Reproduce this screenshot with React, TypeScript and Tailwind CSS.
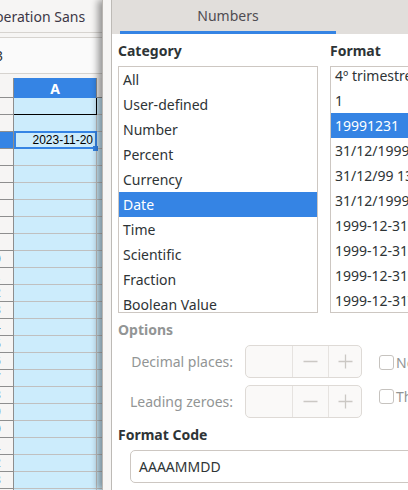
import React from "react";

const categories = [
  "All",
  "User-defined",
  "Number",
  "Percent",
  "Currency",
  "Date",
  "Time",
  "Scientific",
  "Fraction",
  "Boolean Value",
];

const formats = [
  "4º trimestre de 1999",
  "1",
  "19991231",
  "31/12/1999 13:37",
  "31/12/99 13:37",
  "31/12/1999 13:37:46",
  "1999-12-31",
  "1999-12-31 13:37",
  "1999-12-31 13:37:46",
  "1999-12-31T13:37:46",
];

function Minus() {
  return (
    <svg width="15" height="15" viewBox="0 0 15 15" fill="none">
      <path d="M0.5 7.5h14" stroke="#cbc8c4" strokeWidth="1.3" />
    </svg>
  );
}

function Plus() {
  return (
    <svg width="15" height="15" viewBox="0 0 15 15" fill="none">
      <path d="M0.5 7.5h14M7.5 0.5v14" stroke="#cbc8c4" strokeWidth="1.3" />
    </svg>
  );
}

function Spin() {
  return (
    <div className="ml-[12px] flex h-[33px] w-[117px] flex-none overflow-hidden rounded-[5px] border border-[#dedad6] bg-[#faf9f8]">
      <div className="w-[46px] flex-none" />
      <div className="flex w-[36px] flex-none items-center justify-center border-l border-[#e6e3e0]">
        <Minus />
      </div>
      <div className="flex flex-1 items-center justify-center border-l border-[#e6e3e0]">
        <Plus />
      </div>
    </div>
  );
}

export default function App() {
  const rows = Array.from({ length: 24 }, (_, i) => i + 1);
  return (
    <div className="flex h-[490px] w-[408px] overflow-hidden bg-white font-['Noto_Sans',sans-serif] text-[14px] text-[#2e3436]">
      {/* Spreadsheet in the background */}
      <div className="flex w-[102px] flex-none flex-col overflow-hidden bg-white">
        <div className="flex h-[33px] flex-none items-center overflow-hidden border-b border-[#d6d3cf] bg-[#f6f5f4]">
          <span className="ml-[-16px] whitespace-nowrap text-[#3d3846]">Liberation Sans</span>
        </div>
        <div className="h-[5px] flex-none border-b border-[#d6d3cf] bg-[#f6f5f4]" />
        <div className="flex h-[36px] flex-none items-center overflow-hidden border-b border-[#d6d3cf] bg-[#fafafa]">
          <span className="ml-[-14px] whitespace-nowrap text-[#2e3436]">A3</span>
        </div>
        <div className="h-[4px] flex-none bg-[#f6f5f4]" />
        <div className="flex h-[20px] flex-none">
          <div className="w-[14px] flex-none border-b border-r border-[#8e8e8e] bg-[#f6f5f4]" />
          <div className="flex w-[83px] flex-none items-center justify-center border-r border-[#8e8e8e] bg-[#3584e4] text-[14px] font-bold text-white">
            A
          </div>
          <div className="flex-1 border-b border-[#8e8e8e] bg-[#f2f1f0]" />
        </div>
        {rows.map((r) => (
          <div key={r} className="flex h-[17px] flex-none">
            <div
              className={`w-[14px] flex-none overflow-hidden border-b border-r border-[#8e8e8e] ${
                r === 3 ? "bg-[#3584e4]" : "bg-[#f6f5f4]"
              }`}
            >
              <div className="ml-[-21px] w-[30px] text-center font-['Liberation_Sans',sans-serif] text-[12px] leading-[16px] text-[#2e3436]">
                {r}
              </div>
            </div>
            {r === 1 ? (
              <div className="w-[83px] flex-none border-b border-r border-black bg-[#ccecfc]" />
            ) : r === 3 ? (
              <div className="relative flex w-[83px] flex-none items-center justify-end border-b border-r border-[#c0c0c0] bg-[#ccecfc] pr-[3px] font-['Liberation_Sans',sans-serif] text-[12px] text-black">
                2023-11-20
                <div className="absolute bottom-[-1px] left-0 right-[-1px] top-[-1px] border-2 border-[#3584e4]" />
                <div className="absolute bottom-[-3px] right-[-2px] h-[5px] w-[5px] bg-[#3584e4]" />
              </div>
            ) : (
              <div className="w-[83px] flex-none border-b border-r border-[#c0c0c0] bg-[#ccecfc]" />
            )}
            <div className="flex-1 border-b border-[#c0c0c0] bg-[#ccecfc]" />
          </div>
        ))}
      </div>

      {/* Format cells dialog */}
      <div className="relative z-10 flex w-[306px] flex-none border-l border-[#b8b5b1] bg-[#f6f5f4] pl-[8px] shadow-[-4px_0_7px_rgba(0,0,0,0.4)]">
        <div className="flex min-w-0 flex-1 flex-col border-l border-[#bdbab6]">
          <div className="flex h-[34px] flex-none bg-[#e1dedb] pl-[8px]">
            <div className="flex w-[216px] flex-none flex-col">
              <div className="flex flex-1 items-center justify-center text-[#4f4c52]">Numbers</div>
              <div className="h-[3px] bg-[#3584e4]" />
            </div>
          </div>
          <div className="flex-1 overflow-hidden bg-white pl-[6px] pt-[5px]">
            <div className="flex gap-[12px]">
              <div className="w-[200px] flex-none">
                <div className="h-[24px] font-bold leading-[24px]">Category</div>
                <div className="mt-[3px] h-[247px] overflow-hidden border border-[#cdc7c2] bg-white">
                  {categories.map((c) => (
                    <div
                      key={c}
                      className={`h-[25px] whitespace-nowrap pl-[4px] leading-[25px] ${
                        c === "Date" ? "bg-[#3584e4] text-white" : ""
                      }`}
                    >
                      {c}
                    </div>
                  ))}
                </div>
              </div>
              <div className="w-[200px] flex-none">
                <div className="h-[24px] font-bold leading-[24px]">Format</div>
                <div className="mt-[3px] h-[247px] overflow-hidden border border-[#cdc7c2] bg-white">
                  <div className="mt-[-4px]">
                    {formats.map((f, i) => (
                      <div
                        key={i}
                        className={`h-[25px] whitespace-nowrap pl-[4px] leading-[25px] ${
                          i === 2 ? "bg-[#3584e4] text-white" : ""
                        }`}
                      >
                        {f}
                      </div>
                    ))}
                  </div>
                </div>
              </div>
            </div>

            <div className="mt-[5px] h-[24px] font-bold leading-[24px] text-[#929595]">Options</div>
            <div className="mt-[3px] flex">
              <div className="flex flex-none flex-col gap-[7px] pl-[12px]">
                <div className="flex h-[33px] items-center">
                  <div className="w-[103px] whitespace-nowrap text-right text-[#929595]">Decimal places:</div>
                  <Spin />
                </div>
                <div className="flex h-[33px] items-center">
                  <div className="w-[103px] whitespace-nowrap text-right text-[#929595]">Leading zeroes:</div>
                  <Spin />
                </div>
              </div>
              <div className="ml-[17px] flex flex-none flex-col">
                <div className="flex h-[34px] items-center">
                  <div className="h-[15px] w-[15px] flex-none rounded-[3px] border border-[#c6c3bf] bg-white" />
                  <span className="ml-[2px] whitespace-nowrap text-[#929595]">Negative numbers red</span>
                </div>
                <div className="flex h-[34px] items-center">
                  <div className="h-[15px] w-[15px] flex-none rounded-[3px] border border-[#c6c3bf] bg-white" />
                  <span className="ml-[2px] whitespace-nowrap text-[#929595]">Thousands separator</span>
                </div>
              </div>
            </div>

            <div className="mt-[5px] h-[24px] font-bold leading-[24px]">Format Code</div>
            <div className="ml-[12px] mt-[3px] flex h-[33px] w-[300px] items-center rounded-[5px] border border-[#cdc7c2] bg-white pl-[8px]">
              AAAAMMDD
            </div>
          </div>
        </div>
      </div>
    </div>
  );
}
